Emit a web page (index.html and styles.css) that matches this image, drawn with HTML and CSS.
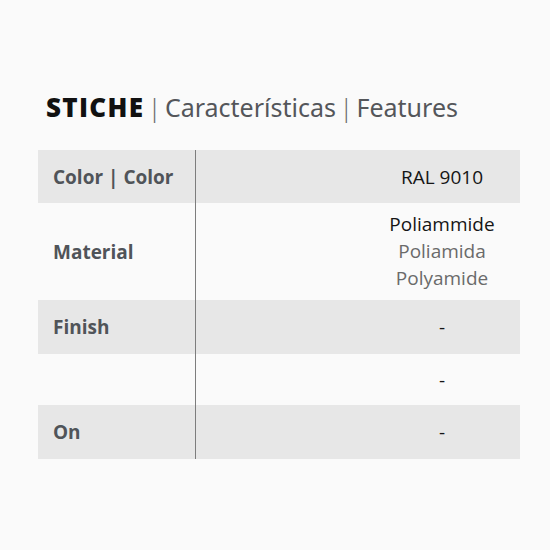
FILE: index.html
```html
<!DOCTYPE html>
<html lang="it">
<head>
<meta charset="utf-8">
<title>STICHE | Características | Features</title>
<link rel="stylesheet" href="styles.css">
</head>
<body>
<div class="page">
  <h1 class="title"><span class="brand">STICHE</span> <span class="sep">|</span> Características <span class="sep">|</span> Features</h1>
  <div class="table">
    <div class="row shade h53">
      <div class="label">Color | Color</div>
      <div class="value"><span class="v">RAL 9010</span></div>
    </div>
    <div class="row h97">
      <div class="label">Material</div>
      <div class="value"><span class="v multi"><span class="main">Poliammide</span><span class="alt">Poliamida</span><span class="alt">Polyamide</span></span></div>
    </div>
    <div class="row shade h54">
      <div class="label">Finish</div>
      <div class="value"><span class="v">-</span></div>
    </div>
    <div class="row h51">
      <div class="label"></div>
      <div class="value"><span class="v">-</span></div>
    </div>
    <div class="row shade h54">
      <div class="label">On</div>
      <div class="value"><span class="v">-</span></div>
    </div>
  </div>
</div>
</body>
</html>
```
FILE: styles.css
```css
html, body {
  margin: 0;
  padding: 0;
  background: #fafafa;
}
body {
  font-family: "Open Sans", "Noto Sans", sans-serif;
  width: 550px;
  height: 550px;
  overflow: hidden;
}
.page {
  padding: 92px 30px 0 38px;
}
.title {
  margin: 0 0 28px 8px;
  font-family: "Noto Sans", sans-serif;
  font-size: 25px;
  line-height: 30px;
  font-weight: 400;
  color: #54565a;
  white-space: nowrap;
  word-spacing: -3px;
}
.brand {
  font-family: "Open Sans", sans-serif;
  font-size: 26px;
  font-weight: 800;
  letter-spacing: 1.3px;
  color: #111;
}
.sep {
  font-weight: 300;
  color: #6a6a6a;
}
.table {
  display: flex;
  flex-direction: column;
  width: 482px;
}
.row {
  display: grid;
  grid-template-columns: 157px 1fr;
}
.shade {
  background: #e7e7e7;
}
.h53 { height: 53px; }
.h97 { height: 97px; }
.h54 { height: 54px; }
.h51 { height: 51px; }
.label {
  display: flex;
  align-items: center;
  padding-left: 15px;
  font-size: 19px;
  font-weight: 700;
  color: #505459;
}
.value {
  border-left: 1px solid #7d7d7d;
  display: flex;
  align-items: center;
  justify-content: flex-end;
}
.v {
  width: 156px;
  text-align: center;
  font-size: 19px;
  color: #151515;
}
.multi {
  display: flex;
  flex-direction: column;
  line-height: 27px;
}
.alt {
  color: #6a6a6a;
}
```
